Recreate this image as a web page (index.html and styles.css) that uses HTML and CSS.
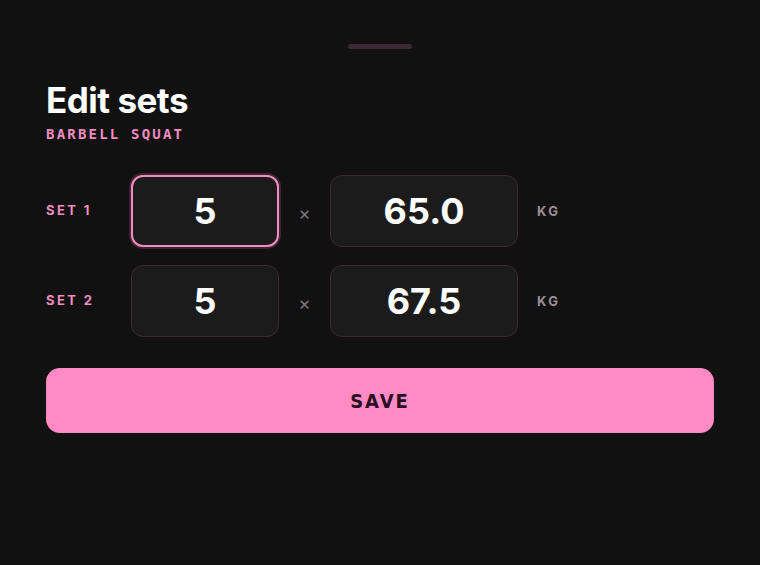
FILE: index.html
```html
<!DOCTYPE html>
<html>
<head>
<meta charset="utf-8">
<link rel="stylesheet" href="styles.css">
</head>
<body>
<div class="sheet">
  <div class="handle-row"><div class="handle"></div></div>
  <h1 class="title">Edit sets</h1>
  <div class="subtitle">BARBELL SQUAT</div>
  <div class="sets">
    <div class="set-row">
      <div class="set-label">SET 1</div>
      <div class="field field-reps focused">5</div>
      <div class="times">×</div>
      <div class="field field-weight">65.0</div>
      <div class="unit">KG</div>
    </div>
    <div class="set-row">
      <div class="set-label">SET 2</div>
      <div class="field field-reps">5</div>
      <div class="times">×</div>
      <div class="field field-weight">67.5</div>
      <div class="unit">KG</div>
    </div>
  </div>
  <button class="save">SAVE</button>
</div>
</body>
</html>
```

FILE: styles.css
```css
html, body {
  margin: 0;
  padding: 0;
  background: #111111;
}
body {
  width: 760px;
  height: 565px;
  overflow: hidden;
  font-family: "Inter", "Noto Sans", sans-serif;
  color: #ffffff;
}
.sheet {
  padding: 44px 46px 0 46px;
  display: flex;
  flex-direction: column;
}
.handle-row {
  display: flex;
  justify-content: center;
}
.handle {
  width: 64px;
  height: 5px;
  border-radius: 3px;
  background: #3b2a33;
}
.title {
  margin: 31px 0 0 0;
  font-size: 35px;
  line-height: 40px;
  font-weight: 700;
  letter-spacing: -0.5px;
  color: #ffffff;
}
.subtitle {
  margin-top: 5px;
  font-family: "DejaVu Sans Mono", "Liberation Mono", monospace;
  font-weight: 700;
  font-size: 14px;
  line-height: 18px;
  letter-spacing: 2.2px;
  color: #f08cc0;
}
.sets {
  margin-top: 32px;
  display: flex;
  flex-direction: column;
  gap: 18px;
}
.set-row {
  display: grid;
  grid-template-columns: 85px 148px 51px 188px auto;
  align-items: center;
  height: 72px;
}
.set-label {
  font-size: 13px;
  font-weight: 700;
  letter-spacing: 2.4px;
  color: #f08cc0;
  padding-bottom: 2px;
}
.field {
  box-sizing: border-box;
  height: 72px;
  border: 1px solid #3d2a33;
  border-radius: 12px;
  background: #1c1b1c;
  display: flex;
  align-items: center;
  justify-content: center;
  font-size: 36px;
  font-weight: 700;
  color: #ffffff;
}
.field.focused {
  border: 2px solid #f38cc2;
  box-shadow: 0 0 0 2px #3f2131;
}
.times {
  text-align: center;
  font-size: 19px;
  color: #7a7476;
  padding-top: 4px;
}
.unit {
  padding-left: 19px;
  font-size: 13px;
  font-weight: 700;
  letter-spacing: 2.4px;
  color: #9d8e95;
}
.save {
  margin-top: 31px;
  height: 65px;
  width: 100%;
  border: none;
  border-radius: 14px;
  background: #ff8ac4;
  color: #2a0f1e;
  font-family: "DejaVu Sans Condensed", "Inter", sans-serif;
  font-size: 20px;
  font-weight: 700;
  letter-spacing: 2px;
  cursor: pointer;
}
```
